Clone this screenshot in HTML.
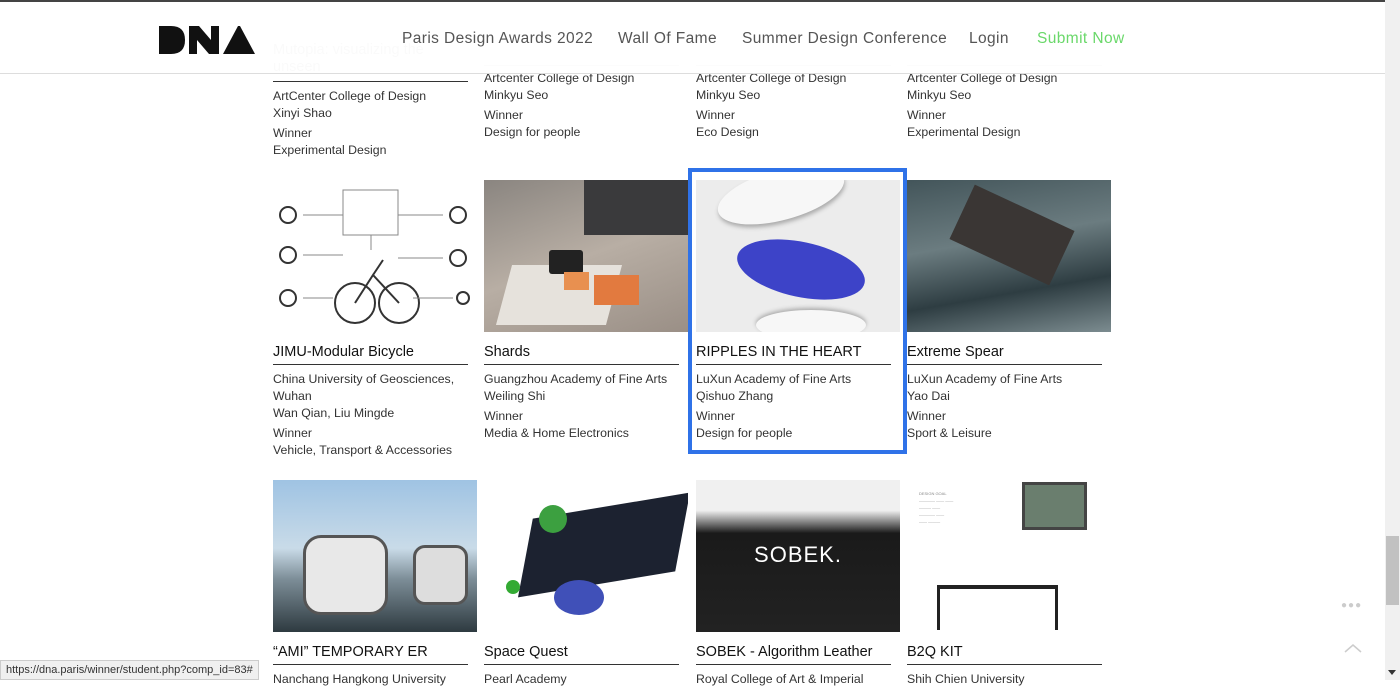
<!DOCTYPE html>
<html><head><style>
*{margin:0;padding:0;box-sizing:border-box}
body{width:1400px;height:680px;overflow:hidden;background:#fff;font-family:"Liberation Sans",sans-serif;position:relative}
.card{position:absolute;width:204px}
.img{width:204px;height:152px;position:relative;overflow:hidden}
.t{font-size:14.5px;color:#111;margin-top:12px;height:21px;width:195px;border-bottom:1.5px solid #333;line-height:16px}
.i{font-size:12.3px;color:#333;line-height:17px;margin-top:6px}
.i p+p{margin-top:3px}
.hdr{position:absolute;left:0;top:0;width:1385px;height:74px;background:rgba(255,255,255,.93);border-top:2px solid #444;border-bottom:1px solid #ddd;z-index:5}
.nav{position:absolute;top:28px;font-size:15.5px;color:#555;letter-spacing:.4px}
.sb{position:absolute;right:0;top:0;width:15px;height:680px;background:#f0f0f0}
</style></head><body>
<div class="card" style="left:273px;top:42px"><div style="font-size:14.5px;color:#bbb;line-height:17px">Mutopia: visualizing the<br>unseen</div><div style="width:195px;border-bottom:1.5px solid #333;margin-top:5px"></div><div class="i" style="margin-top:6px"><p>ArtCenter College of Design<br>Xinyi Shao</p><p>Winner<br>Experimental Design</p></div></div>
<div class="card" style="left:484px;top:43px"><div style="width:195px;border-bottom:1.5px solid #ccc;height:23px"></div><div class="i" style="margin-top:4px"><p>Artcenter College of Design<br>Minkyu Seo</p><p>Winner<br>Design for people</p></div></div>
<div class="card" style="left:696px;top:43px"><div style="width:195px;border-bottom:1.5px solid #ccc;height:23px"></div><div class="i" style="margin-top:4px"><p>Artcenter College of Design<br>Minkyu Seo</p><p>Winner<br>Eco Design</p></div></div>
<div class="card" style="left:907px;top:43px"><div style="width:195px;border-bottom:1.5px solid #ccc;height:23px"></div><div class="i" style="margin-top:4px"><p>Artcenter College of Design<br>Minkyu Seo</p><p>Winner<br>Experimental Design</p></div></div>

<div class="card" style="left:273px;top:180px"><div class="img" style="background:#fff">
<svg width="204" height="152"><g fill="none" stroke="#333" stroke-width="2"><circle cx="82" cy="123" r="20"/><circle cx="126" cy="123" r="20"/><path d="M82 123 L100 95 L126 123 M100 95 L110 80"/><circle cx="15" cy="35" r="8"/><circle cx="15" cy="75" r="8"/><circle cx="15" cy="118" r="8"/><circle cx="185" cy="35" r="8"/><circle cx="185" cy="78" r="8"/><circle cx="190" cy="118" r="6"/></g><g stroke="#888" fill="none"><rect x="70" y="10" width="55" height="45"/><path d="M30 35H70M30 75H70M30 118H60M125 35H170M125 78H170M140 118H180M98 55V70"/></g></svg></div>
<div class="t">JIMU-Modular Bicycle</div><div class="i"><p>China University of Geosciences,<br>Wuhan<br>Wan Qian, Liu Mingde</p><p>Winner<br>Vehicle, Transport &amp; Accessories</p></div></div>

<div class="card" style="left:484px;top:180px"><div class="img" style="background:linear-gradient(160deg,#8a8580,#b8aea4 50%,#9a8f86)">
<div style="position:absolute;left:100px;top:0;width:104px;height:55px;background:#3a3a3c"></div>
<div style="position:absolute;left:20px;top:85px;width:110px;height:60px;background:#e6e2dc;transform:skewX(-15deg)"></div>
<div style="position:absolute;left:65px;top:70px;width:34px;height:24px;background:#222;border-radius:3px"></div>
<div style="position:absolute;left:110px;top:95px;width:45px;height:30px;background:#e27a3f"></div>
<div style="position:absolute;left:80px;top:92px;width:25px;height:18px;background:#e89050"></div></div>
<div class="t">Shards</div><div class="i"><p>Guangzhou Academy of Fine Arts<br>Weiling Shi</p><p>Winner<br>Media &amp; Home Electronics</p></div></div>

<div style="position:absolute;left:688px;top:168px;width:219px;height:286px;border:4px solid #2f72e8"></div>
<div class="card" style="left:696px;top:180px"><div class="img" style="background:#ececec">
<div style="position:absolute;left:20px;top:-10px;width:130px;height:50px;background:#f7f7f7;border-radius:50%;transform:rotate(-15deg);box-shadow:0 3px 4px #aaa"></div>
<div style="position:absolute;left:40px;top:62px;width:130px;height:55px;background:#3d43c8;border-radius:50%;transform:rotate(12deg)"></div>
<div style="position:absolute;left:60px;top:130px;width:110px;height:30px;background:#f7f7f7;border-radius:50%;box-shadow:0 -2px 4px #aaa"></div></div>
<div class="t">RIPPLES IN THE HEART</div><div class="i"><p>LuXun Academy of Fine Arts<br>Qishuo Zhang</p><p>Winner<br>Design for people</p></div></div>

<div class="card" style="left:907px;top:180px"><div class="img" style="background:linear-gradient(170deg,#43555a,#6b7c80 40%,#2e3d42 70%,#7c8c90)">
<div style="position:absolute;left:50px;top:25px;width:110px;height:60px;background:#3a3634;transform:rotate(25deg)"></div></div>
<div class="t">Extreme Spear</div><div class="i"><p>LuXun Academy of Fine Arts<br>Yao Dai</p><p>Winner<br>Sport &amp; Leisure</p></div></div>

<div class="card" style="left:273px;top:480px"><div class="img" style="background:linear-gradient(180deg,#9fc3e3,#c9dbe8 45%,#7d8e98 65%,#2e3a40)">
<div style="position:absolute;left:30px;top:55px;width:85px;height:80px;background:#e8e8e8;border-radius:18px;border:3px solid #555"></div>
<div style="position:absolute;left:140px;top:65px;width:55px;height:60px;background:#ddd;border-radius:12px;border:3px solid #555"></div></div>
<div class="t">“AMI” TEMPORARY ER</div><div class="i"><p>Nanchang Hangkong University</p></div></div>

<div class="card" style="left:484px;top:480px"><div class="img" style="background:#fff">
<div style="position:absolute;left:45px;top:25px;width:150px;height:80px;background:#1c2230;transform:skewX(-20deg) rotate(-10deg)"></div>
<div style="position:absolute;left:55px;top:25px;width:28px;height:28px;background:#3ca040;border-radius:50%"></div>
<div style="position:absolute;left:70px;top:100px;width:50px;height:35px;background:#4050b8;border-radius:50%"></div>
<div style="position:absolute;left:22px;top:100px;width:14px;height:14px;background:#3a3;border-radius:50%"></div></div>
<div class="t">Space Quest</div><div class="i"><p>Pearl Academy</p></div></div>

<div class="card" style="left:696px;top:480px"><div class="img" style="background:linear-gradient(180deg,#f0f0f0 0,#f0f0f0 20%,#1a1a1a 35%,#222 100%)">
<div style="position:absolute;left:0;right:0;top:62px;text-align:center;color:#fff;font-size:22px;letter-spacing:1px">SOBEK.</div></div>
<div class="t">SOBEK - Algorithm Leather</div><div class="i"><p>Royal College of Art &amp; Imperial</p></div></div>

<div class="card" style="left:907px;top:480px"><div class="img" style="background:#fff">
<div style="position:absolute;left:115px;top:2px;width:65px;height:48px;background:#6a7e6e;border:3px solid #444"></div>
<div style="position:absolute;left:30px;top:105px;width:120px;height:4px;background:#222"></div>
<div style="position:absolute;left:30px;top:105px;width:3px;height:45px;background:#222"></div>
<div style="position:absolute;left:148px;top:105px;width:3px;height:45px;background:#222"></div>
<div style="position:absolute;left:12px;top:10px;width:90px;font-size:4px;color:#888;line-height:7px">DESIGN GOAL<br>———— —— ——<br>——— ——<br>———— ——<br>—— ———</div></div>
<div class="t">B2Q KIT</div><div class="i"><p>Shih Chien University</p></div></div>

<div class="hdr">
<svg style="position:absolute;left:159px;top:24px" width="96" height="28" viewBox="0 0 96 28">
<path d="M0 0H12Q26 0 26 14Q26 28 12 28H0Z" fill="#111"/><path d="M30 0H40L52 14V0H60V28H50L38 14V28H30Z" fill="#111"/><path d="M64 28L79 0H81L96 28Z" fill="#111"/></svg>
<div class="nav" style="left:402px">Paris Design Awards 2022</div>
<div class="nav" style="left:618px">Wall Of Fame</div>
<div class="nav" style="left:742px">Summer Design Conference</div>
<div class="nav" style="left:969px">Login</div>
<div class="nav" style="left:1037px;color:#6ad86a">Submit Now</div>
</div>

<div style="position:absolute;left:1341px;top:600px;color:#ccc;font-size:10px;letter-spacing:1px">●●●</div>
<svg style="position:absolute;left:1344px;top:643px" width="18" height="10"><path d="M1 9L9 2L17 9" fill="none" stroke="#ccc" stroke-width="1.5"/></svg>
<div class="sb"><div style="position:absolute;left:1px;top:536px;width:13px;height:69px;background:#c1c1c1"></div><div style="position:absolute;left:3px;top:670px;border:4px solid transparent;border-top:5px solid #333"></div></div>
<div style="position:absolute;left:0;bottom:0;height:20px;padding:3px 5px;background:#f0f0f0;border:1px solid #ccc;font-size:11px;color:#333;z-index:9">https://dna.paris/winner/student.php?comp_id=83#</div>
</body></html>
